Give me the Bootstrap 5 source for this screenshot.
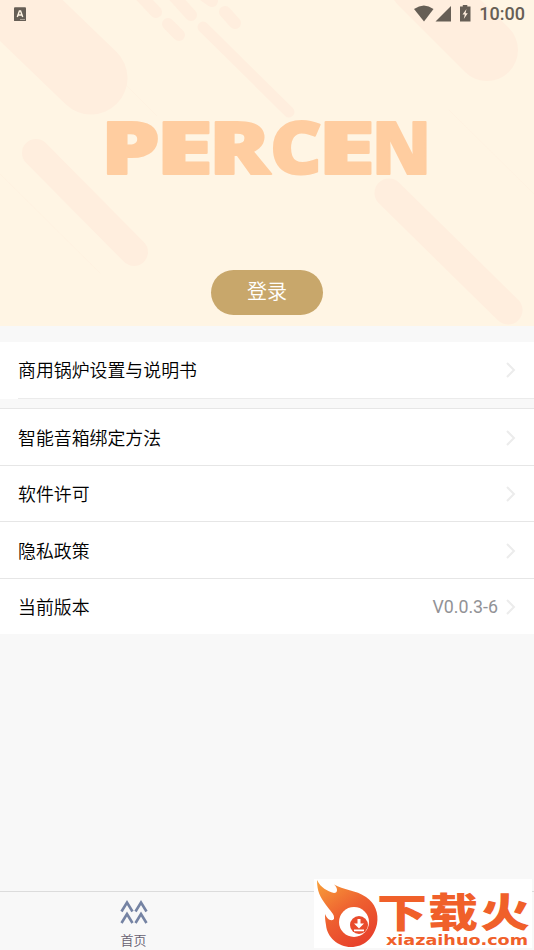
<!DOCTYPE html>
<html lang="zh-CN">
<head>
<meta charset="utf-8">
<meta name="viewport" content="width=device-width, initial-scale=1">
<title>PERCEN</title>
<link href="https://cdn.jsdelivr.net/npm/bootstrap@5.3.0/dist/css/bootstrap.min.css" rel="stylesheet">
<style>
body{background:#f8f8f8;font-family:Roboto,"Noto Sans CJK SC",sans-serif;color:#000;height:950px;overflow:hidden}
.hero{height:326px;background:#fff5e4}
.hero-art{z-index:0}
.status{height:27px;padding:0 9px 0 14px;color:#665e55;z-index:1}
.clock{font-size:18px;font-weight:500;line-height:26px;padding-top:1px}
.login{width:112px;height:45px;background:#c8a76b;color:#fff;border:0;font-size:20px;font-weight:350;line-height:42px;padding:1px 0 2px;margin-bottom:11px;z-index:1}
.menu-first{margin-top:16px;height:57px;background:#fff}
.menu-first .rule{height:1px;margin-left:18px;background:#ebebeb}
.menu-row{font-size:17.9px;font-weight:350;padding:2px 17px 0 18px;line-height:26px}
.menu-first .menu-row{height:56px;padding-top:0;padding-bottom:1px}
.menu-rest{margin-top:9px;background:#fff}
.menu-rest .menu-row{height:56.5px;border-top:1px solid #e6e6e6}
.menu-row span:first-child{position:relative;top:1px}
.ver{color:#929296;font-weight:400;font-size:17.8px;margin-right:7px}
.tabs{height:59px;border-top:1px solid #dcdcdc;background:#f8f8f8}
.tab-item{width:267px;font-size:13px;font-weight:350;line-height:18px;color:#666070;padding-top:8px}
.stamp{right:2px;bottom:2px;width:218px;height:69px;background:#fff;overflow:visible}
</style>
</head>
<body class="d-flex flex-column">
<header class="hero position-relative d-flex flex-column justify-content-between align-items-center flex-shrink-0">
  <svg class="hero-art position-absolute top-0 start-0" width="534" height="326" viewBox="0 0 534 326">
    <g stroke="#ffeede" stroke-linecap="round" fill="none">
      <path d="M-20-29 91 78" stroke-width="73"/>
      <path d="M420-17 487 50" stroke-width="62"/>
      <path d="M36 153 134 252" stroke-width="28"/>
      <path d="M389 193 508 310" stroke-width="29"/>
      <path d="M203 27 289 112" stroke-width="11"/>
      <path d="M137-8 156 12M168 24 179 35M172-6 191 15M202-6 212 1M225 12 235 23" stroke-width="12"/>
      <path d="M56 15 157 116M0 174 100 273M449 110 534 194" stroke-width=".5"/>
    </g>
    <g fill="#ffcda0" stroke="#ffcda0" stroke-width="2" stroke-linejoin="round" font-family="Open Sans" font-weight="800" font-size="73">
      <text y="174"><tspan x="101" textLength="59" lengthAdjust="spacingAndGlyphs">P</tspan><tspan x="156" textLength="57" lengthAdjust="spacingAndGlyphs">E</tspan><tspan x="209" textLength="61" lengthAdjust="spacingAndGlyphs">R</tspan><tspan x="270" textLength="52" lengthAdjust="spacingAndGlyphs">C</tspan><tspan x="318" textLength="57" lengthAdjust="spacingAndGlyphs">E</tspan><tspan x="372" textLength="59" lengthAdjust="spacingAndGlyphs">N</tspan></text>
    </g>
  </svg>
  <div class="status position-relative w-100 d-flex align-items-center">
    <svg width="12" height="14" viewBox="0 0 12 14"><rect width="12" height="14" y=".3" rx="1" fill="#665e55"/><path d="M3.300 10 5.400 4h1.200l2.100 6M4.200 8h3.600" fill="none" stroke="#fff4e3" stroke-width="1.400"/><path d="M6 12.500h5" stroke="#bdb3a6" stroke-width=".8"/></svg>
    <svg class="ms-auto me-2" width="57" height="18" viewBox="0 0 57 18" fill="#665e55"><path d="M0 4Q10-3 19.500 4L10 16.500Z"/><path d="M21.500 16.500 37 1V16.500Z"/><path fill-rule="evenodd" d="M46 1.500h2.800V0h4.500v1.500h3.200V16.500H46ZM52.500 4 48.500 9.500h2.300L49.800 14 53.800 8.200H51.500Z"/></svg>
    <span class="clock">10:00</span>
  </div>
  <button class="login btn rounded-pill position-relative" type="button">登录</button>
</header>
<main class="flex-grow-1">
  <div class="menu-first">
    <div class="menu-row d-flex align-items-center"><span class="me-auto">商用锅炉设置与说明书</span><svg width="12" height="16" viewBox="0 0 12 16"><path d="M2 1 9 8 2 15" fill="none" stroke="#ececec" stroke-width="2"/></svg></div>
    <div class="rule"></div>
  </div>
  <div class="menu-rest">
    <div class="menu-row d-flex align-items-center"><span class="me-auto">智能音箱绑定方法</span><svg width="12" height="16" viewBox="0 0 12 16"><path d="M2 1 9 8 2 15" fill="none" stroke="#ececec" stroke-width="2"/></svg></div>
    <div class="menu-row d-flex align-items-center"><span class="me-auto">软件许可</span><svg width="12" height="16" viewBox="0 0 12 16"><path d="M2 1 9 8 2 15" fill="none" stroke="#ececec" stroke-width="2"/></svg></div>
    <div class="menu-row d-flex align-items-center"><span class="me-auto">隐私政策</span><svg width="12" height="16" viewBox="0 0 12 16"><path d="M2 1 9 8 2 15" fill="none" stroke="#ececec" stroke-width="2"/></svg></div>
    <div class="menu-row d-flex align-items-center"><span class="me-auto">当前版本</span><span class="ver">V0.0.3-6</span><svg width="12" height="16" viewBox="0 0 12 16"><path d="M2 1 9 8 2 15" fill="none" stroke="#ececec" stroke-width="2"/></svg></div>
  </div>
</main>
<nav class="tabs position-relative flex-shrink-0">
  <div class="tab-item d-flex flex-column align-items-center">
    <svg class="mb-2" width="28" height="24" viewBox="0 0 28 24" fill="none" stroke="#7583a3" stroke-width="2.600"><path d="M1.500 11.500 7 2.500 12.500 11.500M15.500 11.500 21 2.500 26.500 11.500M1.500 23 7 14 12.500 23M15.500 23 21 14 26.500 23"/></svg>
    <span>首页</span>
  </div>
  <svg class="stamp position-absolute" viewBox="314 879 218 69">
    <defs><linearGradient id="flame" x1="0" y1="0" x2=".6" y2="1"><stop offset="0" stop-color="#f8a13a"/><stop offset=".55" stop-color="#ee6030"/><stop offset="1" stop-color="#e8432c"/></linearGradient></defs>
    <path fill="url(#flame)" d="M317 880C321 888 327 891 334 893C338 893 338 888 334 884.500C343 890 356 890 366 897C375 903 379 913 377 924C374 938 364 947 351 947C338 947 327 937 326 925C325 920 325 917 325 914C327 919 331 922 334 919C335 914 330 911 326 905C320 897 317 891 317 880Z"/>
    <circle cx="354" cy="922" r="15" fill="#fff"/><circle cx="359" cy="925" r="9" fill="#e94b2c"/>
    <path d="M357.500 919h3v4.500h3.500L359 928.500 354 923.500h3.500ZM354 929.500h10v1.700H354Z" fill="#fff"/>
    <g fill="#f0602a">
      <text font-family="Noto Sans CJK SC" font-weight="900" font-size="40" y="926.500"><tspan x="377" textLength="50" lengthAdjust="spacingAndGlyphs">下</tspan><tspan x="428" textLength="50" lengthAdjust="spacingAndGlyphs">载</tspan><tspan x="480" textLength="50" lengthAdjust="spacingAndGlyphs">火</tspan></text>
      <text font-family="DejaVu Sans" font-weight="700" font-size="14.500" x="386" y="945" textLength="142" lengthAdjust="spacingAndGlyphs">xiazaihuo.com</text>
    </g>
  </svg>
</nav>
<script src="https://cdn.jsdelivr.net/npm/bootstrap@5.3.0/dist/js/bootstrap.bundle.min.js"></script>
</body>
</html>
